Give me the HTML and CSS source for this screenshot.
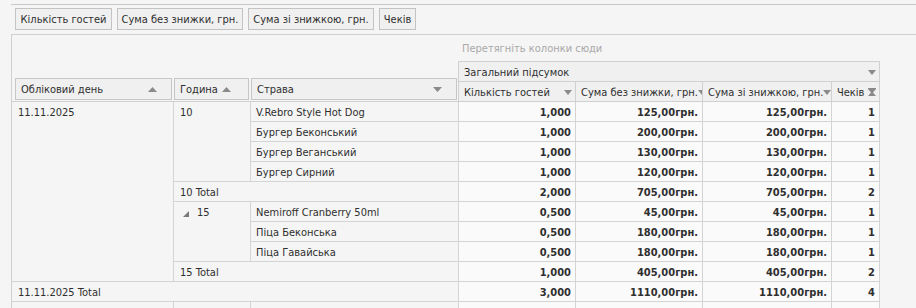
FILE: index.html
```html
<!DOCTYPE html>
<html lang="uk">
<head>
    <meta charset="UTF-8">
    <title>Зведена таблиця</title>
    <link rel="stylesheet" href="styles.css">
</head>
<body>
    <div class="topline"></div>
    <div class="fields">
        <div class="field w1">Кількість гостей</div>
        <div class="field w2">Сума без знижки, грн.</div>
        <div class="field w3">Сума зі знижкою, грн.</div>
        <div class="field w4">Чеків</div>
    </div>

    <div class="pivot">
        <div class="pivot-head">
            <div class="row-area">
                <div class="hdr hdr-day">
                    <span>Обліковий день</span>
                    <svg class="sort-up push" width="9" height="5"><polygon points="0,5 9,5 4.5,0"/></svg>
                </div>
                <div class="hdr hdr-hour">
                    <span>Година</span>
                    <svg class="sort-up" width="9" height="5"><polygon points="0,5 9,5 4.5,0"/></svg>
                </div>
                <div class="hdr hdr-dish">
                    <span>Страва</span>
                    <svg class="sort-down push" width="9" height="5"><polygon points="0,0 9,0 4.5,5"/></svg>
                </div>
            </div>
            <div class="col-area">
                <div class="hint">Перетягніть колонки сюди</div>
                <div class="col-block">
                    <div class="total-bar">
                        <span>Загальний підсумок</span>
                        <svg class="drop push" width="8" height="5"><polygon points="0,0 8,0 4,5"/></svg>
                    </div>
                    <div class="col-heads">
                        <div class="col-cell c1">
                            <span>Кількість гостей</span>
                            <svg class="drop push" width="8" height="5"><polygon points="0,0 8,0 4,5"/></svg>
                        </div>
                        <div class="col-cell c2">
                            <span>Сума без знижки, грн.</span>
                            <svg class="drop push" width="8" height="5"><polygon points="0,0 8,0 4,5"/></svg>
                        </div>
                        <div class="col-cell c3">
                            <span>Сума зі знижкою, грн.</span>
                            <svg class="drop push" width="8" height="5"><polygon points="0,0 8,0 4,5"/></svg>
                        </div>
                        <div class="col-cell c4">
                            <span>Чеків</span>
                            <svg class="funnel push" width="8" height="8"><polygon points="0,0 8,0 8,1 5,4.5 8,8 0,8 3,4.5 0,1"/></svg>
                        </div>
                    </div>
                </div>
            </div>
        </div>

        <div class="pivot-body">
            <div class="rh span-r9">11.11.2025</div>
            <div class="rh span-r4">10</div>
            <div class="rh dish">V.Rebro Style Hot Dog</div>
            <div class="num">1,000</div><div class="num">125,00грн.</div><div class="num">125,00грн.</div><div class="num">1</div>

            <div class="rh dish">Бургер Беконський</div>
            <div class="num">1,000</div><div class="num">200,00грн.</div><div class="num">200,00грн.</div><div class="num">1</div>

            <div class="rh dish">Бургер Веганський</div>
            <div class="num">1,000</div><div class="num">130,00грн.</div><div class="num">130,00грн.</div><div class="num">1</div>

            <div class="rh dish">Бургер Сирний</div>
            <div class="num">1,000</div><div class="num">120,00грн.</div><div class="num">120,00грн.</div><div class="num">1</div>

            <div class="rh span-c2">10 Total</div>
            <div class="num">2,000</div><div class="num">705,00грн.</div><div class="num">705,00грн.</div><div class="num">2</div>

            <div class="rh span-r3 expanded">
                <svg class="expand" width="6" height="6"><polygon points="6,0 6,6 0,6"/></svg>
                <span>15</span>
            </div>
            <div class="rh dish">Nemiroff Cranberry 50ml</div>
            <div class="num">0,500</div><div class="num">45,00грн.</div><div class="num">45,00грн.</div><div class="num">1</div>

            <div class="rh dish">Піца Беконська</div>
            <div class="num">0,500</div><div class="num">180,00грн.</div><div class="num">180,00грн.</div><div class="num">1</div>

            <div class="rh dish">Піца Гавайська</div>
            <div class="num">0,500</div><div class="num">180,00грн.</div><div class="num">180,00грн.</div><div class="num">1</div>

            <div class="rh span-c2">15 Total</div>
            <div class="num">1,000</div><div class="num">405,00грн.</div><div class="num">405,00грн.</div><div class="num">2</div>

            <div class="rh span-c3">11.11.2025 Total</div>
            <div class="num">3,000</div><div class="num">1110,00грн.</div><div class="num">1110,00грн.</div><div class="num">4</div>

            <div class="rh"></div><div class="rh"></div><div class="rh dish"></div>
            <div class="num"></div><div class="num"></div><div class="num"></div><div class="num"></div>
        </div>
    </div>
</body>
</html>
```

FILE: styles.css
```css
body {
    margin: 0;
    height: 308px;
    overflow: hidden;
    background: #f5f5f5;
    font-family: "DejaVu Sans Condensed", "Liberation Sans", sans-serif;
    font-size: 11px;
    color: #2f2f2f;
}
.topline {
    margin: 4px 0 0 11px;
    border-top: 1px solid #c9c9c9;
}
.fields {
    display: flex;
    gap: 5px;
    margin: 3px 0 0 15px;
}
.field {
    box-sizing: border-box;
    height: 22px;
    border: 1px solid #c3c3c3;
    background: #f0f0f0;
    padding-top: 1px;
    line-height: 19px;
    text-align: center;
    white-space: nowrap;
}
.w1 { width: 97px; }
.w2 { width: 126px; }
.w3 { width: 126px; }
.w4 { width: 37px; }

.pivot {
    margin: 4px 0 0 11px;
    border-top: 1px solid #d0d0d0;
    border-left: 1px solid #d0d0d0;
}
.pivot-head {
    display: flex;
}
.row-area {
    box-sizing: border-box;
    width: 446px;
    height: 67px;
    padding: 0 0 1px 3px;
    border-bottom: 1px solid #d0d0d0;
    display: flex;
    align-items: flex-end;
    gap: 2px;
}
.hdr {
    box-sizing: border-box;
    height: 22px;
    border: 1px solid #c6c6c6;
    background: #f0f0f0;
    display: flex;
    align-items: center;
    padding: 1px 0 0 5px;
    white-space: nowrap;
}
.hdr-day { width: 157px; }
.hdr-hour { width: 75px; }
.hdr-dish { width: 206px; }
.hdr svg { fill: #8a8a8a; }
.hdr .push { margin-left: auto; margin-right: 14px; }
.sort-up { margin-left: 4px; }

.col-area {
    width: 422px;
}
.hint {
    box-sizing: border-box;
    height: 26px;
    padding: 2px 0 0 4px;
    line-height: 24px;
    color: #a9a9a9;
}
.col-block {
    border: 1px solid #d0d0d0;
}
.total-bar {
    box-sizing: border-box;
    height: 19px;
    border-bottom: 1px solid #d0d0d0;
    background: #f0f0f0;
    display: flex;
    align-items: center;
    padding: 1px 0 0 5px;
    height: 20px;
}
.col-heads {
    display: flex;
    background: #f0f0f0;
}
.col-cell {
    box-sizing: border-box;
    height: 19px;
    border-right: 1px solid #d0d0d0;
    display: flex;
    align-items: center;
    padding: 1px 0 0 5px;
    white-space: nowrap;
    overflow: hidden;
}
.c1 { width: 117px; }
.c2 { width: 127px; }
.c3 { width: 129px; }
.c4 { width: 47px; border-right: none; }
.col-block svg { fill: #8a8a8a; flex: none; }
.col-block .push { margin-left: auto; margin-right: 3px; }
.funnel { fill: #9a9a9a; }

.pivot-body {
    display: grid;
    grid-template-columns: 162px 77px 208px 117px 127px 129px 48px;
    grid-auto-rows: 20px;
}
.pivot-body > div {
    box-sizing: border-box;
    border-right: 1px solid #d4d4d4;
    border-bottom: 1px solid #d4d4d4;
    line-height: 21px;
    white-space: nowrap;
}
.rh {
    padding-left: 6px;
}
.rh.dish {
    padding-left: 5px;
}
.num {
    background: #fafafa;
    text-align: right;
    padding-right: 4px;
    font-weight: bold;
}
.span-r9 { grid-row: span 9; }
.span-r4 { grid-row: span 4; }
.span-r3 { grid-row: span 3; }
.span-c2 { grid-column: span 2; }
.span-c3 { grid-column: span 3; }
.expanded {
    display: flex;
    align-items: flex-start;
}
.expand {
    fill: #7a7a7a;
    margin: 9px 8px 0 3px;
}
```
